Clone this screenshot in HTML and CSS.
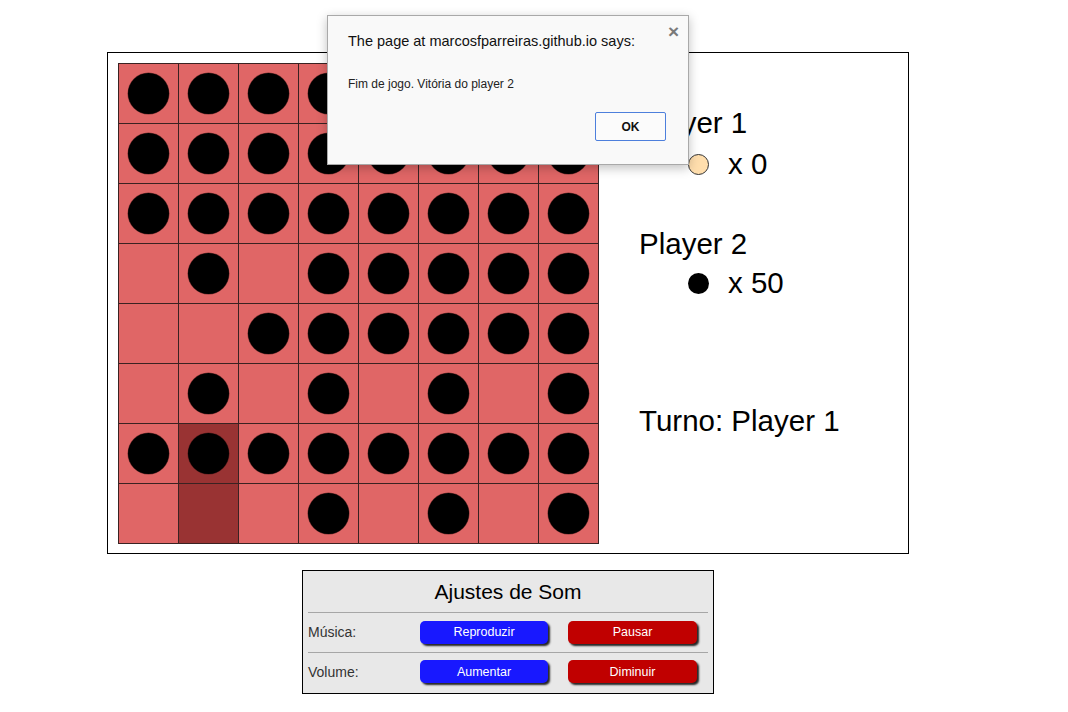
FILE: index.html
```html
<!DOCTYPE html>
<html lang="pt">
<head>
<meta charset="utf-8">
<title>Ataxx</title>
<link rel="stylesheet" href="styles.css">
</head>
<body>
<div class="page">
  <div class="game">
    <div class="board">
      <div class="cell"><span class="disc"></span></div><div class="cell"><span class="disc"></span></div><div class="cell"><span class="disc"></span></div><div class="cell"><span class="disc"></span></div><div class="cell"><span class="disc"></span></div><div class="cell"><span class="disc"></span></div><div class="cell"></div><div class="cell"><span class="disc"></span></div>
      <div class="cell"><span class="disc"></span></div><div class="cell"><span class="disc"></span></div><div class="cell"><span class="disc"></span></div><div class="cell"><span class="disc"></span></div><div class="cell"><span class="disc"></span></div><div class="cell"><span class="disc"></span></div><div class="cell"><span class="disc"></span></div><div class="cell"><span class="disc"></span></div>
      <div class="cell"><span class="disc"></span></div><div class="cell"><span class="disc"></span></div><div class="cell"><span class="disc"></span></div><div class="cell"><span class="disc"></span></div><div class="cell"><span class="disc"></span></div><div class="cell"><span class="disc"></span></div><div class="cell"><span class="disc"></span></div><div class="cell"><span class="disc"></span></div>
      <div class="cell"></div><div class="cell"><span class="disc"></span></div><div class="cell"></div><div class="cell"><span class="disc"></span></div><div class="cell"><span class="disc"></span></div><div class="cell"><span class="disc"></span></div><div class="cell"><span class="disc"></span></div><div class="cell"><span class="disc"></span></div>
      <div class="cell"></div><div class="cell"></div><div class="cell"><span class="disc"></span></div><div class="cell"><span class="disc"></span></div><div class="cell"><span class="disc"></span></div><div class="cell"><span class="disc"></span></div><div class="cell"><span class="disc"></span></div><div class="cell"><span class="disc"></span></div>
      <div class="cell"></div><div class="cell"><span class="disc"></span></div><div class="cell"></div><div class="cell"><span class="disc"></span></div><div class="cell"></div><div class="cell"><span class="disc"></span></div><div class="cell"></div><div class="cell"><span class="disc"></span></div>
      <div class="cell"><span class="disc"></span></div><div class="cell hit"><span class="disc"></span></div><div class="cell"><span class="disc"></span></div><div class="cell"><span class="disc"></span></div><div class="cell"><span class="disc"></span></div><div class="cell"><span class="disc"></span></div><div class="cell"><span class="disc"></span></div><div class="cell"><span class="disc"></span></div>
      <div class="cell"></div><div class="cell hit"></div><div class="cell"></div><div class="cell"><span class="disc"></span></div><div class="cell"></div><div class="cell"><span class="disc"></span></div><div class="cell"></div><div class="cell"><span class="disc"></span></div>
    </div>
    <div class="info">
      <div class="player p1">Player 1</div>
      <div class="score s1"><span class="token light"></span><span>x 0</span></div>
      <div class="player p2">Player 2</div>
      <div class="score s2"><span class="token dark"></span><span>x 50</span></div>
      <div class="turn">Turno: Player 1</div>
    </div>
  </div>

  <div class="sound">
    <div class="sound-title">Ajustes de Som</div>
    <div class="sound-row">
      <span class="label">Música:</span>
      <button class="btn blue">Reproduzir</button>
      <button class="btn red">Pausar</button>
    </div>
    <div class="sound-row">
      <span class="label">Volume:</span>
      <button class="btn blue">Aumentar</button>
      <button class="btn red">Diminuir</button>
    </div>
  </div>
</div>

<div class="dialog">
  <span class="close">×</span>
  <div class="dialog-title">The page at marcosfparreiras.github.io says:</div>
  <div class="dialog-msg">Fim de jogo. Vitória do player 2</div>
  <div class="dialog-actions"><button class="ok">OK</button></div>
</div>
</body>
</html>
```

FILE: styles.css
```css
* { box-sizing: border-box; }

body {
  margin: 0;
  background: #ffffff;
  font-family: "Liberation Sans", Arial, sans-serif;
  color: #000;
}

.page {
  width: 1016px;
  padding-top: 52px;
}

.game {
  width: 802px;
  height: 502px;
  margin: 0 auto;
  border: 1px solid #000;
  padding: 10px;
  display: flex;
  align-items: flex-start;
}

.board {
  display: grid;
  grid-template-columns: repeat(8, 60px);
  grid-template-rows: repeat(8, 60px);
  border-right: 1px solid #3a2222;
  border-bottom: 1px solid #3a2222;
  flex: none;
}

.cell {
  background: #e06666;
  border-left: 1px solid #3a2222;
  border-top: 1px solid #3a2222;
  display: flex;
  align-items: center;
  justify-content: center;
}

.cell.hit { background: #993333; }

.disc {
  width: 41px;
  height: 41px;
  border-radius: 50%;
  background: #000;
  box-shadow: 0 0 0 0.5px rgba(60, 20, 20, 0.6);
}

.info {
  margin-left: 40px;
  font-size: 29.5px;
  line-height: 34px;
}

.p1 { margin-top: 43px; }
.s1 { margin-top: 7px; }
.p2 { margin-top: 46px; }
.s2 { margin-top: 5px; }
.turn { margin-top: 104px; }

.score {
  display: flex;
  align-items: center;
  padding-left: 49px;
}

.token {
  width: 21px;
  height: 21px;
  border-radius: 50%;
  margin-right: 19px;
  flex: none;
}

.token.light {
  background: #ffdead;
  border: 1px solid #333;
}

.token.dark {
  background: #000;
}

.sound {
  width: 412px;
  margin: 16px auto 0;
  border: 1px solid #000;
  background: #e8e8e8;
  padding: 9px 5px 2px;
}

.sound-title {
  font-size: 21px;
  line-height: 24px;
  text-align: center;
  padding-bottom: 8px;
  border-bottom: 1px solid #a6a6a6;
}

.sound-row {
  display: grid;
  grid-template-columns: 92px 128px 129px;
  column-gap: 20px;
  align-items: center;
  height: 39px;
  padding-bottom: 1px;
}

.sound-row + .sound-row {
  border-top: 1px solid #a6a6a6;
}

.label {
  font-size: 14px;
  color: #333;
}

.btn {
  height: 23px;
  border: none;
  border-radius: 5px;
  color: #fff;
  font-family: "Liberation Sans", Arial, sans-serif;
  font-size: 12.5px;
  box-shadow: 2px 2px 2px rgba(0, 0, 0, 0.85);
  padding: 0;
}

.btn.blue { background: #1818ff; }
.btn.red { background: #c00000; }

.dialog {
  position: absolute;
  left: 327px;
  top: 15px;
  width: 362px;
  height: 150px;
  background: #f9f9f9;
  border: 1px solid #a9a9a9;
  box-shadow: 0 3px 10px rgba(0, 0, 0, 0.25);
  padding: 16px 0 0 20px;
  font-family: "Liberation Sans", Arial, sans-serif;
}

.close {
  position: absolute;
  right: 9px;
  top: 6px;
  font-size: 19px;
  font-weight: bold;
  color: #7a7a7a;
  line-height: 20px;
}

.dialog-title {
  font-size: 14.5px;
  line-height: 18px;
  color: #111;
}

.dialog-msg {
  margin-top: 27px;
  font-size: 12px;
  line-height: 14px;
  color: #222;
}

.dialog-actions {
  display: flex;
  justify-content: flex-end;
  padding-right: 22px;
  margin-top: 21px;
}

.ok {
  width: 71px;
  height: 29px;
  background: #fbfbfb;
  border: 1px solid #4d7fdc;
  border-radius: 2px;
  font-family: "Liberation Sans", Arial, sans-serif;
  font-size: 12px;
  font-weight: bold;
  color: #111;
}
```
